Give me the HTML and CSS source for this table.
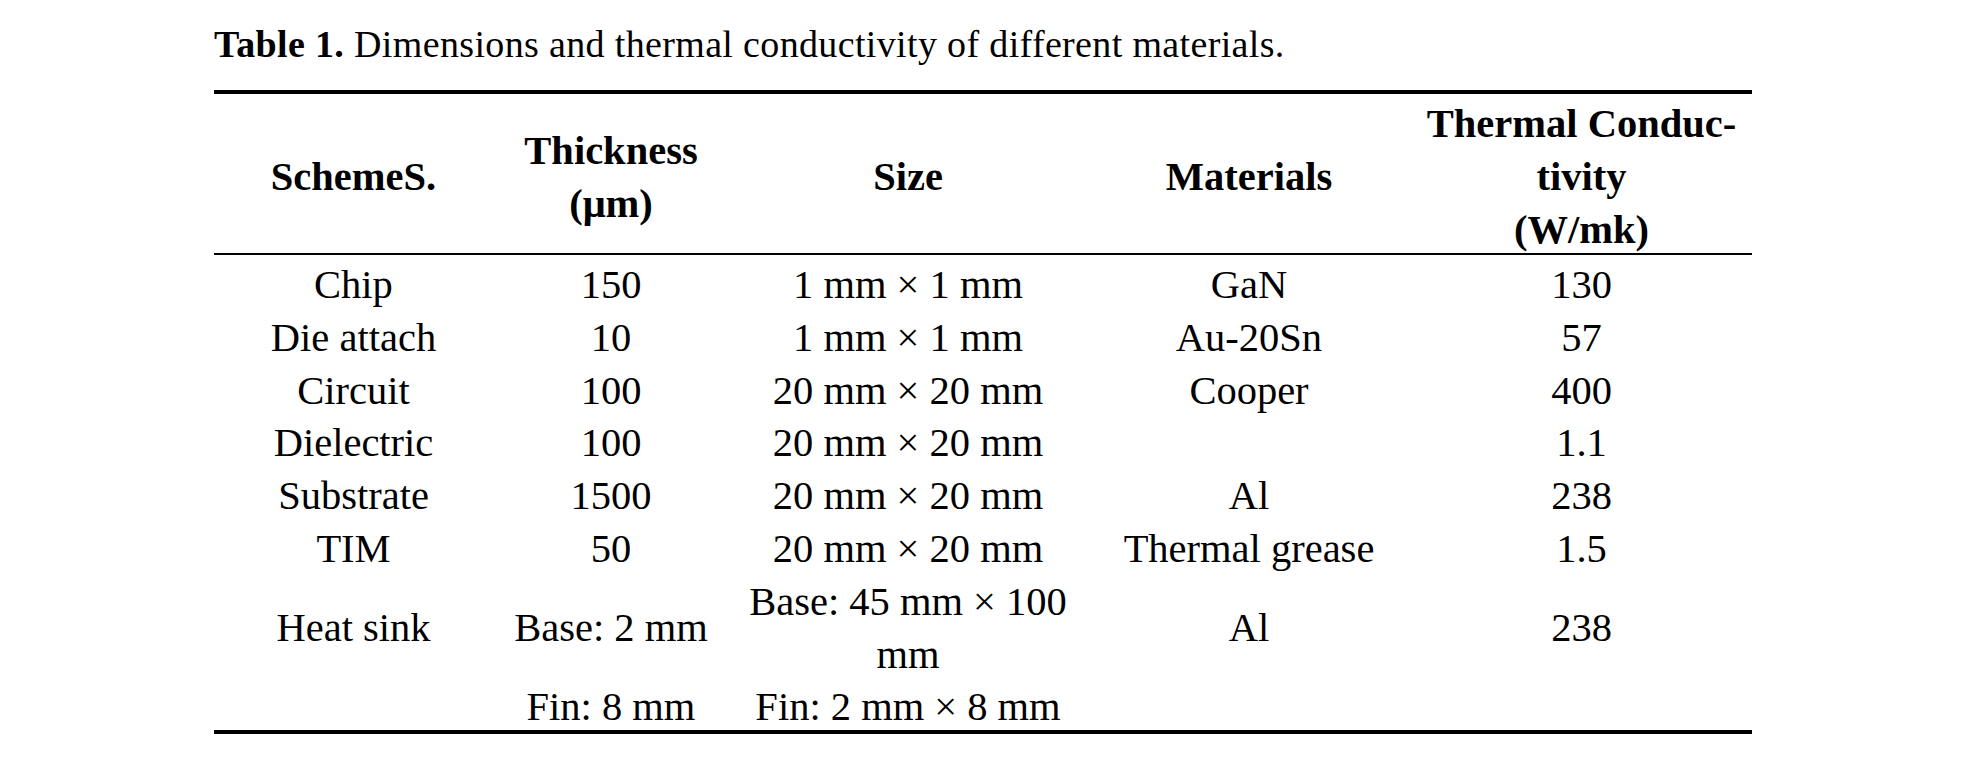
FILE: index.html
```html
<!DOCTYPE html>
<html>
<head>
<meta charset="utf-8">
<link rel="stylesheet" href="styles.css">
</head>
<body>
<div class="page">
  <p class="caption"><b>Table 1.</b> Dimensions and thermal conductivity of different materials.</p>
  <table class="data">
    <colgroup>
      <col class="c1"><col class="c2"><col class="c3"><col class="c4"><col class="c5">
    </colgroup>
    <thead>
      <tr>
        <th><span class="t">SchemeS.</span></th>
        <th><span class="t">Thickness<br>(μm)</span></th>
        <th><span class="t">Size</span></th>
        <th><span class="t">Materials</span></th>
        <th><span class="t">Thermal Conduc-<br>tivity<br>(W/mk)</span></th>
      </tr>
    </thead>
    <tbody>
      <tr><td><span class="t">Chip</span></td><td><span class="t">150</span></td><td><span class="t">1 mm × 1 mm</span></td><td><span class="t">GaN</span></td><td><span class="t">130</span></td></tr>
      <tr><td><span class="t">Die attach</span></td><td><span class="t">10</span></td><td><span class="t">1 mm × 1 mm</span></td><td><span class="t">Au-20Sn</span></td><td><span class="t">57</span></td></tr>
      <tr><td><span class="t">Circuit</span></td><td><span class="t">100</span></td><td><span class="t">20 mm × 20 mm</span></td><td><span class="t">Cooper</span></td><td><span class="t">400</span></td></tr>
      <tr><td><span class="t">Dielectric</span></td><td><span class="t">100</span></td><td><span class="t">20 mm × 20 mm</span></td><td></td><td><span class="t">1.1</span></td></tr>
      <tr><td><span class="t">Substrate</span></td><td><span class="t">1500</span></td><td><span class="t">20 mm × 20 mm</span></td><td><span class="t">Al</span></td><td><span class="t">238</span></td></tr>
      <tr><td><span class="t">TIM</span></td><td><span class="t">50</span></td><td><span class="t">20 mm × 20 mm</span></td><td><span class="t">Thermal grease</span></td><td><span class="t">1.5</span></td></tr>
      <tr><td><span class="t">Heat sink</span></td><td><span class="t">Base: 2 mm</span></td><td><span class="t">Base: 45 mm × 100<br>mm</span></td><td><span class="t">Al</span></td><td><span class="t">238</span></td></tr>
      <tr class="last"><td></td><td><span class="t">Fin: 8 mm</span></td><td><span class="t">Fin: 2 mm × 8 mm</span></td><td></td><td></td></tr>
    </tbody>
  </table>
</div>
</body>
</html>
```
FILE: styles.css
```css
html, body {
  margin: 0;
  padding: 0;
  background: #ffffff;
}
.page {
  padding: 0 0 0 214px;
  font-family: "Liberation Serif", "Times New Roman", serif;
  color: #000000;
}
.caption {
  margin: 0;
  padding-top: 22px;
  font-size: 38px;
  letter-spacing: 0.35px;
  line-height: 44px;
  height: 68px;
  white-space: nowrap;
}
.data {
  border-collapse: collapse;
  width: 1538px;
  table-layout: fixed;
  font-size: 40.5px;
  line-height: 52.8px;
}
.c1 { width: 279px; }
.c2 { width: 236px; }
.c3 { width: 358px; }
.c4 { width: 324px; }
.c5 { width: 341px; }
.data th, .data td {
  padding: 0;
  text-align: center;
  vertical-align: middle;
  white-space: nowrap;
}
.t {
  display: block;
  margin-top: 4px;
  margin-bottom: -4px;
}
.data thead tr {
  border-top: 4px solid #000000;
  border-bottom: 2.5px solid #000000;
}
.data thead th {
  height: 159px;
  font-weight: bold;
}
.data tbody tr.last {
  border-bottom: 4px solid #000000;
}
```
